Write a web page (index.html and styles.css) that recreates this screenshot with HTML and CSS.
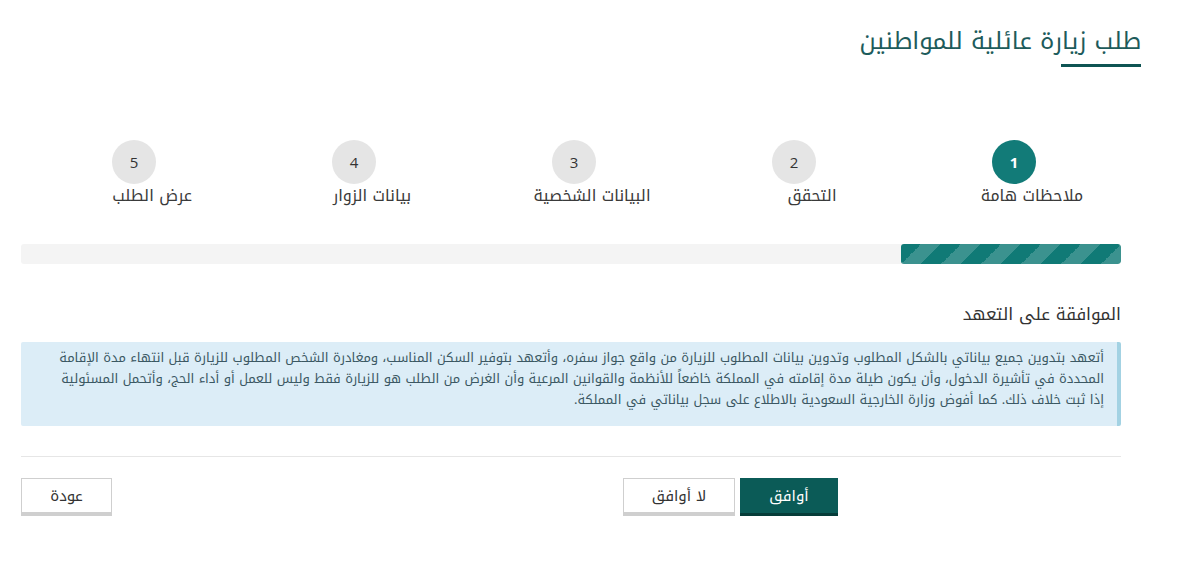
FILE: index.html
```html
<!DOCTYPE html>
<html lang="ar" dir="rtl">
<head>
<meta charset="utf-8">
<title>طلب زيارة عائلية للمواطنين</title>
<link rel="stylesheet" href="styles.css">
</head>
<body>
<div class="page">
  <header class="page-header">
    <h1 class="page-title">طلب زيارة عائلية للمواطنين</h1>
  </header>

  <main class="content">
    <ol class="stepper">
      <li class="step active"><span class="step-num">1</span><span class="step-label">ملاحظات هامة</span></li>
      <li class="step"><span class="step-num">2</span><span class="step-label">التحقق</span></li>
      <li class="step"><span class="step-num">3</span><span class="step-label">البيانات الشخصية</span></li>
      <li class="step"><span class="step-num">4</span><span class="step-label">بيانات الزوار</span></li>
      <li class="step"><span class="step-num">5</span><span class="step-label">عرض الطلب</span></li>
    </ol>

    <div class="progress"><div class="progress-bar" style="width: 20%"></div></div>

    <h2 class="section-title">الموافقة على التعهد</h2>

    <div class="notice">
      <p>أتعهد بتدوين جميع بياناتي بالشكل المطلوب وتدوين بيانات المطلوب للزيارة من واقع جواز سفره، وأتعهد بتوفير السكن المناسب، ومغادرة الشخص المطلوب للزيارة قبل انتهاء مدة الإقامة المحددة في تأشيرة الدخول، وأن يكون طيلة مدة إقامته في المملكة خاضعاً للأنظمة والقوانين المرعية وأن الغرض من الطلب هو للزيارة فقط وليس للعمل أو أداء الحج، وأتحمل المسئولية إذا ثبت خلاف ذلك. كما أفوض وزارة الخارجية السعودية بالاطلاع على سجل بياناتي في المملكة.</p>
    </div>

    <hr class="divider">

    <div class="actions">
      <div class="action-group">
        <button class="btn btn-primary" type="button">أوافق</button>
        <button class="btn btn-default" type="button">لا أوافق</button>
      </div>
      <button class="btn btn-default btn-back" type="button">عودة</button>
    </div>
  </main>
</div>
</body>
</html>
```

FILE: styles.css
```css
* { box-sizing: border-box; }

html, body {
  margin: 0;
  padding: 0;
  background: #fff;
}

body {
  font-family: "Open Sans", "Noto Kufi Arabic", "DejaVu Sans", sans-serif;
  color: #333;
  direction: rtl;
}

.page {
  width: 1180px;
  padding: 0 59px 0 21px;
}

.page-header {
  margin-right: -20px;
  padding-top: 22px;
  display: flex;
  flex-direction: column;
  align-items: flex-start;
}

.page-title {
  margin: 0;
  font-family: "Noto Kufi Arabic", "DejaVu Sans", sans-serif;
  font-weight: normal;
  font-size: 24px;
  line-height: 38px;
  color: #1d5b5b;
}

.page-title::after {
  content: "";
  display: block;
  width: 80px;
  height: 3px;
  background: #0e5453;
  margin-top: 4px;
}

.content {
  width: 1100px;
}

.stepper {
  list-style: none;
  margin: 73px -3px 0 3px;
  padding: 0;
  display: grid;
  grid-template-columns: repeat(5, 1fr);
}

.step {
  display: flex;
  flex-direction: column;
  align-items: center;
}

.step-num {
  width: 44px;
  height: 44px;
  border-radius: 50%;
  background: #e5e5e5;
  color: #333;
  font-family: "Open Sans", sans-serif;
  font-size: 15px;
  line-height: 44px;
  display: flex;
  align-items: center;
  justify-content: center;
}

.step.active .step-num {
  background: #127b78;
  color: #fff;
  font-weight: bold;
}

.step-label {
  margin-top: 0;
  margin-right: -36px;
  font-family: "Noto Kufi Arabic", "DejaVu Sans", sans-serif;
  font-size: 16px;
  line-height: 24px;
  color: #3a3a3a;
  white-space: nowrap;
}

.progress {
  margin-top: 36px;
  height: 20px;
  background: #f4f4f4;
  border-radius: 3px;
  overflow: hidden;
  display: flex;
}

.progress-bar {
  height: 100%;
  background-color: #107a76;
  background-image: linear-gradient(-45deg,
    rgba(255,255,255,.18) 25%, transparent 25%,
    transparent 50%, rgba(255,255,255,.18) 50%,
    rgba(255,255,255,.18) 75%, transparent 75%, transparent);
  background-size: 40px 40px;
  border-radius: 3px;
}

.section-title {
  margin: 36px 0 0 0;
  font-family: "Noto Kufi Arabic", "DejaVu Sans", sans-serif;
  font-weight: normal;
  font-size: 17px;
  line-height: 28px;
  color: #333;
}

.notice {
  margin-top: 14px;
  background: #dcedf7;
  border-right: 4px solid #a3d2e3;
  border-radius: 2px;
  padding: 5px 13px 15px 28px;
  min-height: 84px;
}

.notice p {
  margin: 0;
  font-family: "Noto Kufi Arabic", "DejaVu Sans", sans-serif;
  font-size: 13px;
  line-height: 21px;
  color: #3b5863;
}

.divider {
  margin: 30px 0 0 0;
  border: 0;
  border-top: 1px solid #e6e6e6;
}

.actions {
  margin-top: 21px;
  display: flex;
  justify-content: space-between;
  align-items: flex-start;
}

.action-group {
  margin-right: 283px;
  display: flex;
  gap: 5px;
}

.btn {
  font-family: "Noto Kufi Arabic", "DejaVu Sans", sans-serif;
  font-size: 15px;
  height: 38px;
  padding: 0 12px;
  border-radius: 0;
  cursor: pointer;
}

.btn-primary {
  width: 98px;
  background: #0b5b57;
  color: #fff;
  border: 0;
  border-bottom: 3px solid #063c39;
}

.btn-default {
  width: 112px;
  background: #fff;
  color: #333;
  border: 1px solid #cfcfcf;
  border-bottom: 4px solid #cfcfcf;
}

.btn-back {
  width: 91px;
}
```
